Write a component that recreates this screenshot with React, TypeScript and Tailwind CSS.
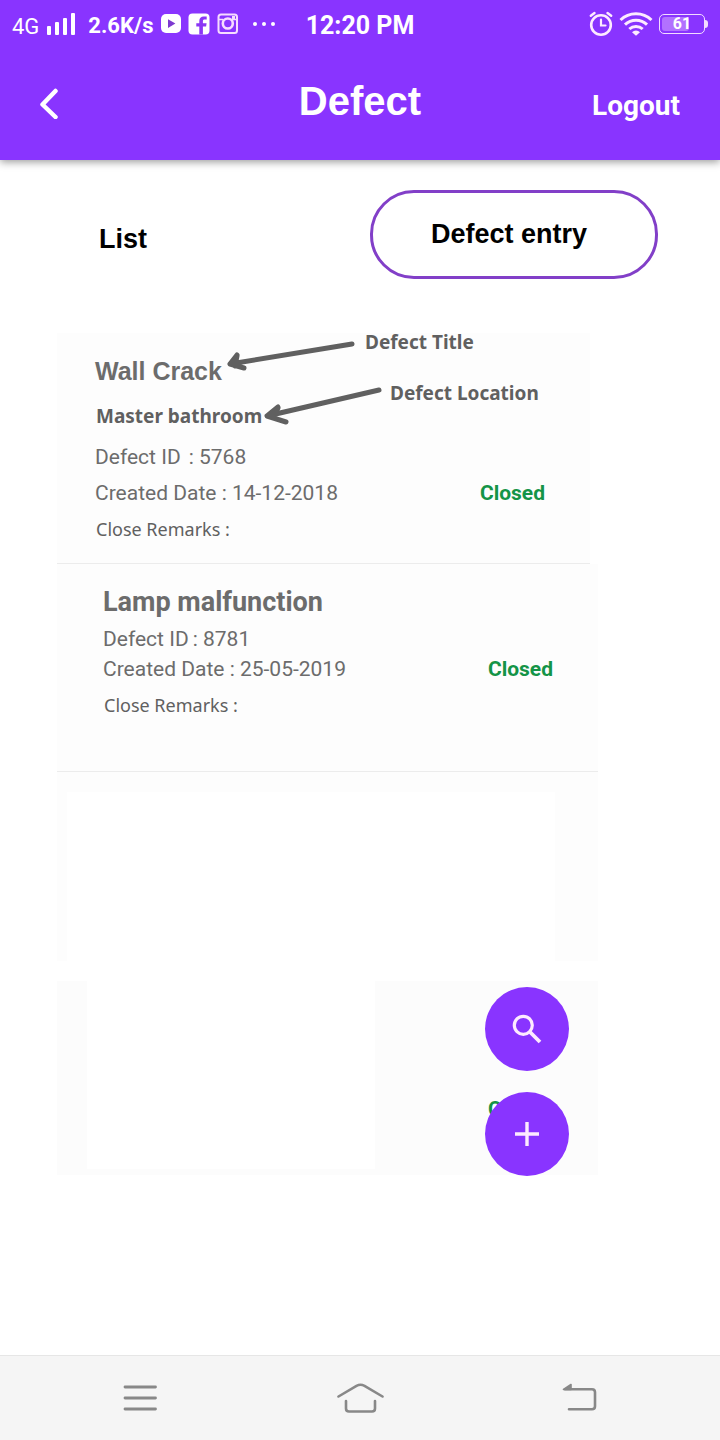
import type { ReactNode } from "react";

function SignalIcon() {
  return (
    <svg width="29" height="24" viewBox="0 0 29 24" fill="#fff" aria-hidden="true">
      <rect x="0" y="14" width="4" height="9" rx="1" />
      <rect x="8" y="10" width="4" height="13" rx="1" />
      <rect x="16" y="6" width="4" height="17" rx="1" />
      <rect x="24" y="1" width="4" height="22" rx="1" />
    </svg>
  );
}

function VideoIcon() {
  return (
    <svg width="20" height="22" viewBox="0 0 20 22" aria-hidden="true">
      <rect x="0" y="1" width="20" height="19" rx="5" fill="#fff" />
      <path d="M7 6.2 14.4 10.6 7 15z" fill="#7d3ad0" />
    </svg>
  );
}

function FacebookIcon() {
  return (
    <svg width="22" height="22" viewBox="0 0 22 22" aria-hidden="true">
      <rect x="0.500" y="0.500" width="21" height="21" rx="4" fill="#fff" />
      <path
        d="M11.300 21.500V13.600H8.300V10.300h3V8c0-3 1.700-4.600 4.400-4.600h3v3.200h-2c-1.300 0-1.800.6-1.800 1.800v1.900h3.700l-.5 3.300h-3.200v7.900z"
        fill="#8b36f5"
      />
    </svg>
  );
}

function InstagramIcon() {
  return (
    <svg width="22" height="22" viewBox="0 0 22 22" fill="none" stroke="#f6dcff" aria-hidden="true">
      <rect x="1.500" y="1.500" width="18.500" height="18.500" rx="2.500" strokeWidth="2" />
      <path d="M2 6.500h4M15 6.500h5" strokeWidth="1.600" />
      <circle cx="10.800" cy="10.500" r="5" strokeWidth="2.600" />
      <rect x="15" y="3" width="3" height="3" fill="#f6dcff" stroke="none" />
    </svg>
  );
}

function DotsIcon() {
  return (
    <svg width="22" height="4" viewBox="0 0 22 4" fill="#fff" aria-hidden="true">
      <circle cx="2" cy="2" r="2" />
      <circle cx="11" cy="2" r="2" />
      <circle cx="20" cy="2" r="2" />
    </svg>
  );
}

function AlarmIcon() {
  return (
    <svg width="24" height="26" viewBox="0 0 24 26" fill="none" stroke="#fdeaff" strokeLinecap="round" aria-hidden="true">
      <circle cx="12" cy="14" r="9.800" strokeWidth="2.600" />
      <path d="M12 8.500v6h4.500" strokeWidth="2.200" />
      <path d="M1.800 4.800 5.500 2M22.200 4.800 18.500 2" strokeWidth="2.400" />
    </svg>
  );
}

function WifiIcon() {
  return (
    <svg width="34" height="26" viewBox="0 0 34 26" fill="none" stroke="#fdeaff" strokeWidth="3" aria-hidden="true">
      <path d="M1.500 9a22.500 22.500 0 0 1 31 0" />
      <path d="M6 13.700a16 16 0 0 1 22 0" />
      <path d="M10.300 18a10 10 0 0 1 13.400 0" />
      <path d="M13 21.200a5.500 5.500 0 0 1 8 0L17 24.800z" fill="#fdeaff" stroke="none" />
    </svg>
  );
}

function Battery({ level }: { level: number }) {
  return (
    <div className="flex items-center">
      <div className="relative flex h-5 w-[46px] items-center justify-center rounded-[5px] border border-[#f3dcff] text-base font-bold">
        <span
          className="absolute top-0.5 bottom-0.5 left-0.5 rounded-[3px] bg-[#b271ff]"
          style={{ width: `${level}%` }}
        />
        <span className="relative">{level}</span>
      </div>
      <div className="h-2 w-[3px] rounded-r bg-[#f3dcff]" />
    </div>
  );
}

function StatusBar() {
  return (
    <div className="grid h-12 grid-cols-[1fr_auto_1fr] items-center px-3 font-['Roboto',sans-serif] text-white">
      <div className="flex items-center">
        <span className="pt-1.5 text-[22px] leading-6">4G</span>
        <span className="ml-2">
          <SignalIcon />
        </span>
        <span className="ml-3 pt-1 text-[22px] leading-6 font-bold">2.6K/s</span>
        <span className="ml-2 flex items-center gap-[7px]">
          <VideoIcon />
          <FacebookIcon />
          <InstagramIcon />
        </span>
        <span className="ml-[14px]">
          <DotsIcon />
        </span>
      </div>
      <span className="pt-1 text-[25px] leading-6 font-bold">12:20 PM</span>
      <div className="flex items-center justify-end gap-[6px]">
        <AlarmIcon />
        <WifiIcon />
        <Battery level={61} />
      </div>
    </div>
  );
}

function Header() {
  return (
    <header className="relative h-40 bg-[#8934ff] text-white shadow-[0_2px_8px_rgba(0,0,0,0.4)]">
      <StatusBar />
      <div className="grid grid-cols-[1fr_auto_1fr] items-baseline px-10 pt-[30px]">
        <button type="button" aria-label="Back" className="justify-self-start">
          <svg width="18" height="31" viewBox="0 0 18 31" fill="none" stroke="#fff" strokeWidth="4.500" strokeLinecap="round" strokeLinejoin="round" className="translate-y-1">
            <path d="M15.500 3 2.500 16.500l13 12.500" />
          </svg>
        </button>
        <h1 className="font-['Liberation_Sans',sans-serif] text-[40px] leading-[46px] font-bold">Defect</h1>
        <a href="#logout" className="justify-self-end font-['Roboto',sans-serif] text-[28px] leading-8 font-bold">
          Logout
        </a>
      </div>
    </header>
  );
}

function Closed() {
  return <span className="text-[21px] leading-7 font-bold text-[#149447]">Closed</span>;
}

interface DefectProps {
  id: string;
  date: string;
  title: ReactNode;
  className: string;
  rows: string;
  labelGap: string;
}

function DefectFields({ id, date, title, className, rows, labelGap }: DefectProps) {
  return (
    <article className={`border-b border-[#ececec] bg-[#fdfdfd] text-[21px] leading-7 text-[#6c6c6c] ${className}`}>
      {title}
      <div className={`flex flex-col ${rows}`}>
        <p className={`flex ${labelGap}`}>
          <span>Defect ID</span>
          <span>: {id}</span>
        </p>
        <p className="flex justify-between">
          <span>Created Date : {date}</span>
          <Closed />
        </p>
      </div>
      <p className="mt-2 pl-px font-['Noto_Sans',sans-serif] text-lg leading-7 text-[#606060]">Close Remarks :</p>
    </article>
  );
}

function Annotations() {
  return (
    <div className="pointer-events-none absolute top-0 left-[170px] font-['Noto_Sans',sans-serif] text-[19px] leading-7 font-bold text-[#606060]">
      <svg width="156" height="104" viewBox="0 0 156 104" fill="none" stroke="#606060" strokeWidth="5" strokeLinecap="round" strokeLinejoin="round" aria-hidden="true">
        <path d="M125 11 3 31M10 22 3 31l14 4M10 23l-2 10" />
        <path d="M152 57 40 83M51 74 40 83l19 6M51 75l-5 9" />
      </svg>
      <span className="absolute top-[-5px] left-[138px] whitespace-nowrap">Defect Title</span>
      <span className="absolute top-[46px] left-[163px] whitespace-nowrap">Defect Location</span>
    </div>
  );
}

function FloatingActions() {
  const button = "flex size-[84px] items-center justify-center rounded-full bg-[#8934ff]";
  return (
    <div className="absolute top-[6px] right-[29px] flex flex-col gap-[21px]">
      <button type="button" aria-label="Search" className={button}>
        <svg width="30" height="30" viewBox="0 0 30 30" fill="none" stroke="#fdeaff" aria-hidden="true">
          <circle cx="11.300" cy="11.300" r="9" strokeWidth="3.200" />
          <path d="m18 18 10 10" strokeWidth="3.800" />
        </svg>
      </button>
      <button type="button" aria-label="Add defect" className={button}>
        <svg width="24" height="24" viewBox="0 0 24 24" fill="none" stroke="#fdeaff" strokeWidth="3.400" aria-hidden="true">
          <path d="M12 0v24M0 12h24" />
        </svg>
      </button>
    </div>
  );
}

function NavBar() {
  return (
    <nav className="grid h-[85px] grid-cols-3 items-center justify-items-center border-t border-[#e6e6e6] bg-[#f5f5f5] px-[30px]">
      <button type="button" aria-label="Menu">
        <svg width="34" height="30" viewBox="0 0 34 30" fill="none" stroke="#888" strokeWidth="2.800" strokeLinecap="round">
          <path d="M2 4h30.500M2 15h30.500M2 26h30.500" />
        </svg>
      </button>
      <button type="button" aria-label="Home">
        <svg width="48" height="30" viewBox="0 0 48 30" fill="none" stroke="#888" strokeWidth="2.600" strokeLinecap="round" strokeLinejoin="round">
          <path d="M2.500 13.500 20.500 2.800q4-2 8 0l18 10.700" />
          <path d="M10 18v7.500q0 3 3 3h23q3 0 3-3V18" />
        </svg>
      </button>
      <button type="button" aria-label="Go back">
        <svg width="36" height="30" viewBox="0 0 36 30" fill="none" stroke="#888" strokeWidth="2.600" strokeLinecap="round" strokeLinejoin="round">
          <path d="M3 6.200h27q3 0 3 3v14q0 3-3 3H7" />
          <path d="m1.500 6.500 7.500-5v5z" fill="#888" strokeWidth="1.600" />
        </svg>
      </button>
    </nav>
  );
}

export default function App() {
  return (
    <div className="flex min-h-screen flex-col bg-white">
      <Header />
      <main className="flex-1">
        <div className="flex items-center justify-between pt-[30px] pr-[62px] pl-[99px] font-['Liberation_Sans',sans-serif] text-[27px] leading-8 font-bold text-black">
          <button type="button" className="pt-2">
            List
          </button>
          <button type="button" className="h-[89px] w-72 rounded-[44px] border-[3px] border-[#823fc8] pr-2.5 pb-0.5">
            Defect entry
          </button>
        </div>

        <section className="mt-[54px] mr-[122px] ml-[57px] font-['Roboto',sans-serif]">
          <div className="relative">
            <DefectFields
              id="5768"
              date="14-12-2018"
              className="mr-2 pt-[23px] pr-[45px] pb-5 pl-[38px]"
              rows="mt-[13px] gap-2"
              labelGap="gap-2"
              title={
                <>
                  <h2 className="font-['Liberation_Sans',sans-serif] text-[25px] leading-[30px] font-bold">Wall Crack</h2>
                  <p className="mt-4 pl-px font-['Noto_Sans',sans-serif] text-[19px] font-bold text-[#606060]">Master bathroom</p>
                </>
              }
            />
            <Annotations />
          </div>
          <DefectFields
            id="8781"
            date="25-05-2019"
            className="pt-[23px] pr-[45px] pb-[52px] pl-[46px]"
            rows="mt-2 gap-[2px]"
            labelGap="gap-1"
            title={<h2 className="text-[27px] leading-[30px] font-bold">Lamp malfunction</h2>}
          />
          <div className="h-[189px] bg-[#fdfdfd] pt-5 pr-[43px] pl-[10px]">
            <div className="h-full bg-white" />
          </div>
          <div className="relative mt-5 flex h-[194px] justify-between bg-[#fcfcfc] pr-[45px] pl-[30px]">
            <div className="h-[188px] w-72 bg-white" />
            <div className="pt-[114px]">
              <Closed />
            </div>
            <FloatingActions />
          </div>
        </section>
      </main>
      <NavBar />
    </div>
  );
}
